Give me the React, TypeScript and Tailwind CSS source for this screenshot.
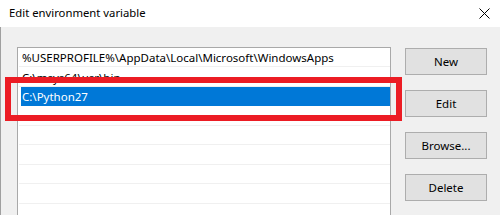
import React from "react";

const entries = [
  "%USERPROFILE%\\AppData\\Local\\Microsoft\\WindowsApps",
  "C:\\msys64\\usr\\bin",
  "C:\\Python27",
  "",
  "",
  "",
  "",
  "",
  "",
];

const heights = [19, 20, 19, 20, 19, 20, 19, 20, 19];

function WinButton({ label }: { label: string }) {
  return (
    <button
      type="button"
      className="h-[27px] w-[82px] border border-[#adadad] bg-[#e1e1e1] pt-[1px] text-[11.5px] text-black"
    >
      {label}
    </button>
  );
}

export default function App() {
  const selected = 2;
  return (
    <div className="relative h-[215px] w-[500px] overflow-hidden bg-[#f0f0f0] font-['Segoe_UI','Noto_Sans',sans-serif] text-[11.5px]">
      <div className="flex h-[27px] items-center justify-between bg-white pl-[9px] pr-[10px]">
        <span className="text-[11.3px] text-black">Edit environment variable</span>
        <svg width="11" height="11" viewBox="0 0 11 11">
          <path d="M0.5 0.5 L10.5 10.5 M10.5 0.5 L0.5 10.5" stroke="#000" strokeWidth="1" />
        </svg>
      </div>

      <div className="flex h-[188px] border-l border-[#a0a0a0] pl-[16px] pt-[20px]">
        <div className="h-[200px] w-[374px] border border-[#a9a9a9] bg-white">
          {entries.map((e, i) => (
            <div
              key={i}
              style={{ height: heights[i] }}
              className={
                i === selected
                  ? "ml-[3px] flex items-center bg-[#0078d7] pl-[1px] pt-[1px] leading-none text-white"
                  : "ml-[1px] flex items-center border-b border-[#f0f0f0] pl-[3px] pt-[2px] leading-none text-black"
              }
            >
              {e}
            </div>
          ))}
        </div>

        <div className="ml-[14px] mt-[1px] flex flex-col gap-[15px]">
          <WinButton label="New" />
          <WinButton label="Edit" />
          <WinButton label="Browse..." />
          <WinButton label="Delete" />
        </div>
      </div>

      <div className="absolute left-[5px] top-[77px] h-[44px] w-[397px] border-[6px] border-[#ec1c24]" />
    </div>
  );
}
